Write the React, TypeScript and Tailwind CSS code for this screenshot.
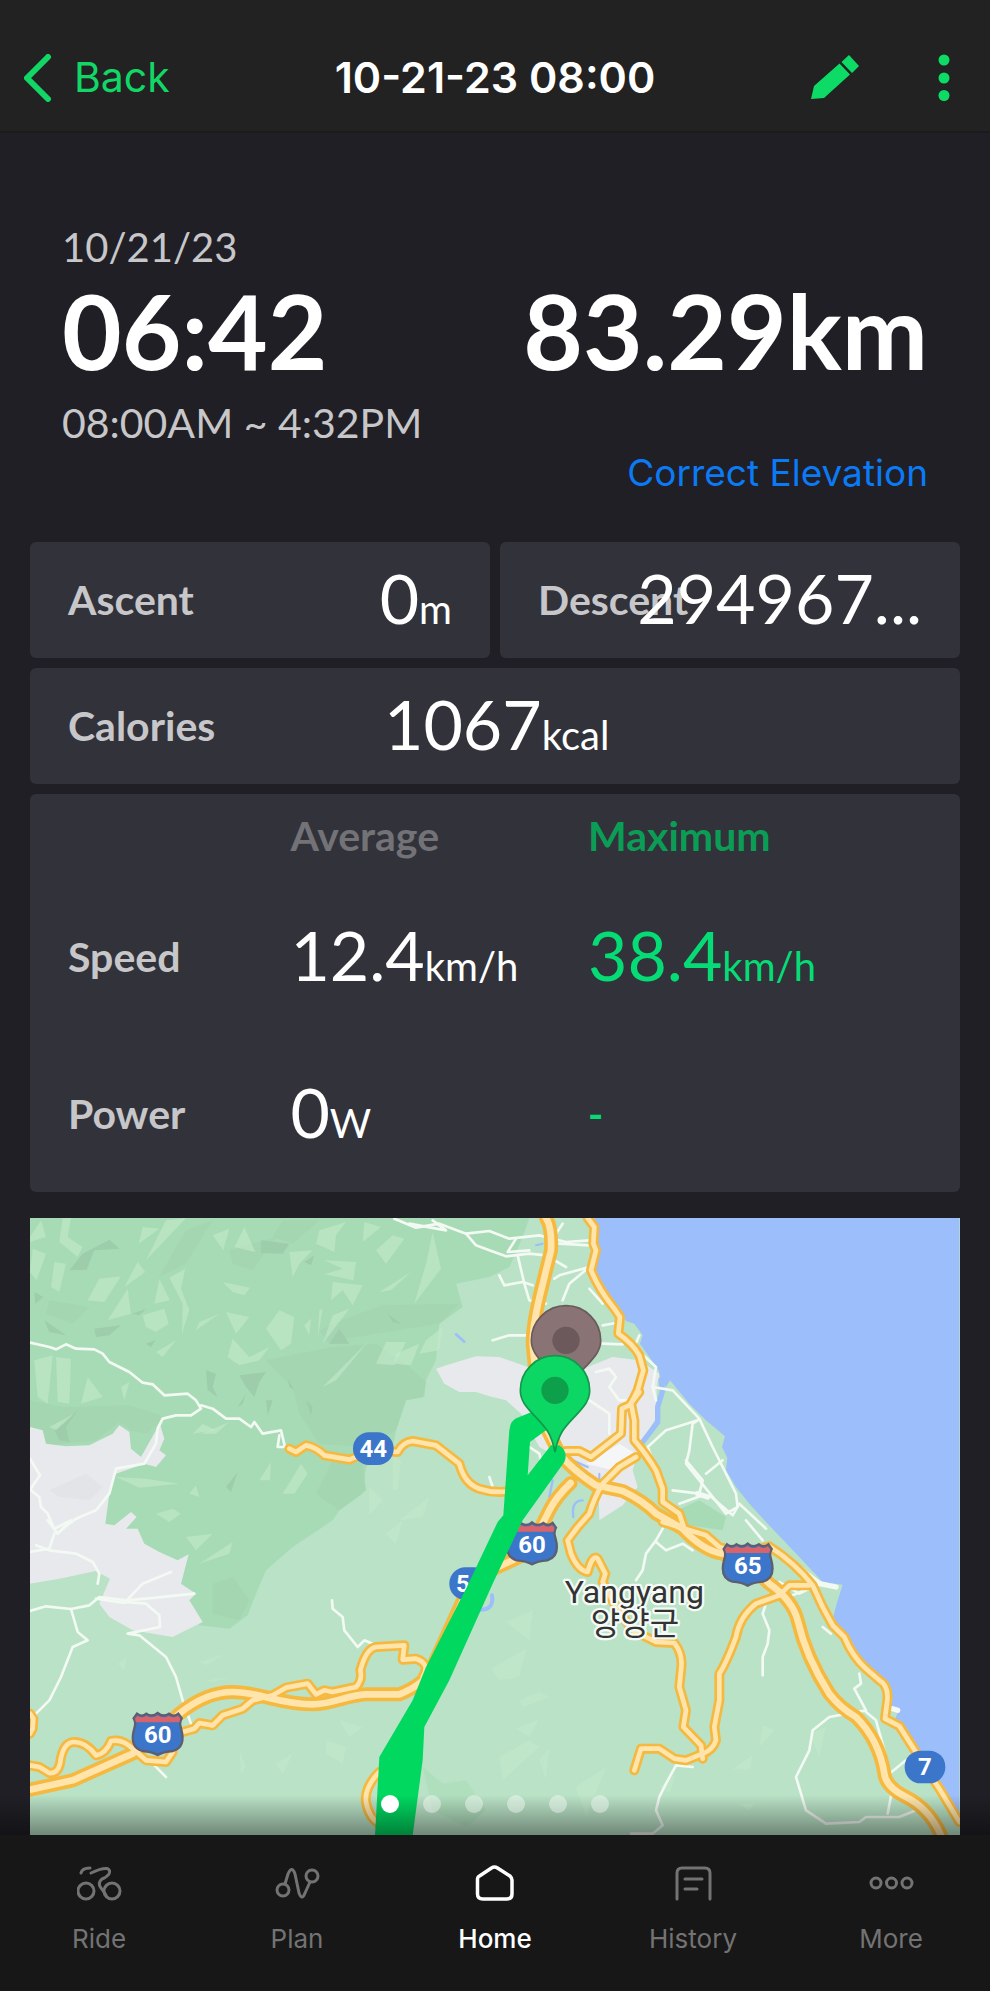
import { useState } from "react";
import type { ReactNode } from "react";
import clsx from "clsx";

interface Road {
  d: string;
  wide?: boolean;
}

// Land cover, drawn as closed polygons
const FOREST =
  "M92 53H1590L1570 110L1530 200L1470 230L1370 250L1390 320L1320 370L1310 480L1280 540L1275 590L1220 600L1190 690L1180 740L1100 800L1090 880L1020 930L1000 960L880 1040L800 1110L770 1180L745 1245L690 1285L600 1275L560 1200L300 1110L92 1150Z";
const WEST_TOWN =
  "M92 680L130 690L140 730L200 738L270 735L340 700L360 675L390 695L395 745L425 770L470 690L480 665L495 715L480 750L500 765L470 800L435 790L350 820L330 880L318 970L345 975L395 935L412 950L380 985L415 985L435 1030L480 1055L535 1080L568 1062L545 1150L590 1180L570 1200L610 1265L520 1310L400 1290L330 1250L300 1210L332 1135L290 1112L180 1135L92 1150Z";
const EAST_TOWN =
  "M1310 505L1340 495L1430 468L1500 470L1600 505L1740 510L1840 470L1920 480L1980 520L1972 560L1972 650L1920 740L1900 810L1915 860L1870 915L1800 960L1798 870L1710 790L1620 740L1565 640L1520 600L1470 588L1430 575L1380 575L1335 550Z";
const SEA =
  "M1785 53L1795 100L1798 170L1782 210L1820 270L1870 340L1880 362L1905 370L1930 405L1922 430L1978 510L1985 540L2000 560L2012 540L2070 610L2120 660L2177 708L2168 740L2184 772L2180 810L2210 860L2250 910L2300 965L2400 1070L2470 1145L2530 1153L2512 1210L2498 1265L2530 1300L2570 1365L2672 1452L2666 1520L2700 1525L2686 1560L2715 1605L2755 1650L2815 1740L2850 1800L2880 1850V53Z";

const LIGHT_FACETS = [
  "M92 110L125 60L140 110L92 125Z",
  "M190 53H215L205 110L250 140L235 170L180 125Z",
  "M100 145L140 160L112 240L92 215Z",
  "M165 185L200 190L180 275L155 260Z",
  "M430 80L480 85L418 130Z",
  "M500 60L560 53L440 180Z",
  "M640 105L690 85L672 150Z",
  "M735 80L768 155L705 140Z",
  "M870 155L940 150L900 190L880 230Z",
  "M960 90L1040 65L1010 105L1005 155L950 130Z",
  "M1095 65L1145 80L1090 125Z",
  "M1130 150L1180 105L1215 115L1160 190Z",
  "M975 180L1070 185L1062 240L975 222L1030 205Z",
  "M1300 95L1325 205L1245 310L1280 190Z",
  "M1000 245L1090 255L1060 315L1030 270L995 300Z",
  "M1140 275L1235 215L1175 270Z",
  "M300 235L365 228L315 305L265 300Z",
  "M415 185L438 215L375 260Z",
  "M480 235L512 300L465 310Z",
  "M510 232L558 205L545 265L570 330L548 400L550 310Z",
  "M385 265L395 340L325 360Z",
  "M670 245L752 262L735 285L700 275Z",
  "M430 345L495 325L508 370L470 395L440 380Z",
  "M600 365L660 340L590 390Z",
  "M680 335L750 350L710 400Z",
  "M840 330L885 350L875 430L845 450L800 385Z",
  "M915 375L935 355L930 405Z",
  "M960 330L970 325L955 415Z",
  "M1000 345L1050 325L970 430Z",
  "M700 415L750 470L810 440L780 480L720 495L685 470Z",
  "M105 480L160 465L145 610L115 590Z",
  "M170 470L215 475L210 610L175 605Z",
  "M245 610L265 530L310 590Z",
  "M365 560L390 545L375 600Z",
  "M1130 490L1160 425L1220 425L1185 495Z",
  "M1190 460L1260 430L1235 495L1185 490Z",
  "M1280 420L1330 380L1320 450L1260 460Z",
  "M970 560L1110 420L1010 540Z",
  "M470 455L530 420L490 470Z",
  "M150 680L225 640L170 690Z",
  "M350 830L440 835L540 850L420 862Z",
  "M540 740L610 670L650 690L580 700Z",
  "M605 700L690 665L650 700Z",
  "M780 840L815 785L812 840Z",
  "M850 880L905 790L925 820L885 880Z",
  "M570 880L590 855L600 890Z",
  "M470 940L520 925L545 940L510 965Z",
  "M1180 765L1205 780L1195 870L1180 870Z",
  "M1110 860L1150 900L1110 945Z",
  "M1200 960L1290 890L1270 950Z",
  "M1160 1000L1210 960L1190 1030Z",
  "M600 1090L700 1025L690 1060Z",
  "M560 1010L640 1000L590 1050Z",
  "M355 1390L382 1370L375 1410Z",
  "M600 1385L680 1360L620 1395Z",
  "M620 1440L700 1430L640 1445Z",
  "M830 1690L880 1660L850 1720Z",
  "M980 1620L1040 1640L1030 1690L980 1660Z",
  "M1020 1560L1090 1580L1050 1610Z",
  "M720 1650L740 1700L725 1720Z",
  "M1520 1265L1600 1230L1590 1320Z",
  "M1475 1405L1580 1345L1560 1430L1500 1440Z",
  "M1560 1500L1620 1475L1650 1490L1570 1520Z",
  "M1550 1585L1620 1555L1590 1610Z",
  "M1500 1670L1590 1620L1620 1640L1510 1740Z",
  "M1620 1680L1650 1640L1640 1740Z",
  "M1730 1760L1820 1700L1760 1850Z",
  "M2200 1705L2260 1665L2250 1710Z",
  "M2290 1575L2325 1590L2280 1640Z",
  "M2430 1600L2480 1580L2460 1670Z",
  "M1980 1760L2030 1720L2010 1780Z",
  "M2220 1810L2265 1810L2250 1830Z",
];

const DARK_FACETS = [
  "M250 160L330 118L360 145L285 150L262 208L210 210Z",
  "M785 120L870 130L850 160L785 158Z",
  "M915 185L945 165L935 195Z",
  "M105 275L132 290L108 310Z",
  "M135 360L200 405L150 395Z",
  "M285 385L365 375L330 405L290 410Z",
  "M990 430L1020 385L1050 430Z",
  "M1165 340L1205 370L1180 365Z",
  "M440 430L470 418L455 440Z",
  "M620 510L650 520L640 560L655 590L625 570Z",
  "M720 525L800 515L780 545L765 590L740 560Z",
  "M865 535L885 570L870 560Z",
  "M800 600L820 600L805 645Z",
  "M920 600L940 620L935 645Z",
  "M715 620L740 580L730 610Z",
  "M680 860L715 815L695 875Z",
  "M165 690L235 630L200 680L210 725L180 720Z",
  "M400 340L440 325L420 345Z",
];

// Slightly shaded slopes
const SLOPES = [
  "M1050 350L1150 315L1380 310L1320 370L1130 400L1010 420L990 430L960 390Z",
  "M800 480L1000 440L1130 430L1230 500L1280 545L1270 590L1220 600L1190 690L1100 740L960 730L900 640L880 560Z",
  "M92 600L190 620L390 615L500 650L440 700L395 690L360 665L290 720L150 735L92 680Z",
  "M690 150L830 110L760 210L700 190Z",
  "M150 300L270 320L220 370L140 340Z",
  "M950 880L1000 780L1090 790L1100 870L1020 930Z",
  "M560 90L640 60L560 190L480 230Z",
  "M850 60L960 60L880 130L820 110Z",
  "M640 1150L700 1130L750 1200L720 1260L640 1240Z",
];

const MINOR_ROADS = [
  "M92 427L150 440L170 447L200 432L230 445L285 447L310 460L330 485L390 515L430 547L460 552L495 585L565 580L590 600L605 625L575 645L530 645L490 655L475 685L470 730L435 790L350 805L330 880L290 930L230 955L190 985",
  "M605 615L640 625L680 655L720 655L755 680L765 665L790 700L845 690L857 740L835 740L840 705",
  "M92 775L122 825L92 868L120 890L125 920L145 940L165 985L215 960",
  "M145 960L175 1000L215 962",
  "M165 1000L150 1045L92 1055",
  "M110 1035L150 1050L230 1060L280 1085L300 1120L295 1150",
  "M92 1232L140 1218L215 1226L270 1215L300 1190L380 1200L440 1195L585 1180",
  "M290 1195L375 1208L430 1150L515 1115",
  "M375 1205L440 1210L480 1245L482 1280L385 1300L420 1305L500 1370L530 1430L550 1500L575 1570",
  "M215 1226L235 1295L265 1320L220 1340L185 1430L150 1500L110 1540",
  "M998 1200L1000 1225L1030 1250L1035 1290L1075 1340L1095 1320L1120 1330",
  "M460 1690L500 1730",
  "M1185 55L1250 82L1320 70L1400 100L1470 92L1530 115L1620 105L1700 125L1770 120",
  "M1230 70L1340 90L1300 60M1400 100L1430 135L1470 150L1520 168L1590 160L1640 165L1700 200",
  "M1550 115L1525 155L1590 150M1555 165L1575 250L1590 300L1640 310",
  "M1500 225L1515 255L1570 245L1600 255",
  "M1480 420L1530 405L1590 405M1810 375L1850 368M1810 430L1870 432",
  "M1690 300L1710 250L1770 200L1680 225L1665 235M1690 70L1670 100M1680 130L1770 135",
  "M1770 265L1810 310M1920 405L1905 440L1970 500L1960 560L1970 600",
  "M1790 515L1830 505L1850 530L1830 560L1860 600L1890 600M1770 600L1830 640L1830 700",
  "M1960 560L2020 570L2100 655L2140 740L2170 800L2210 880L2215 920L2180 940L2060 790L2070 750L2080 670L2095 660L2000 690L1945 740L1960 780",
  "M2060 780L2110 840L2100 880L2020 870M2110 885L2040 910M2130 885L2200 945L2220 910L2300 985",
  "M2120 820L2170 780",
  "M1990 985L1970 1020L1940 1060L1930 1110L1910 1140M1970 1025L2000 1050L2050 1030L2080 1050",
  "M2240 960L2290 1020M2300 1210L2290 1240L2310 1290L2305 1330L2290 1370L2290 1425",
  "M2340 1145L2400 1180L2440 1160L2380 1185",
  "M2580 1420L2585 1450L2565 1465L2600 1530L2490 1550L2440 1590L2430 1650L2390 1730L2405 1780L2420 1830L2480 1870L2580 1865L2600 1850L2700 1850L2750 1830",
  "M2600 1535L2630 1560L2655 1650L2670 1720L2720 1680M2680 1760L2665 1840",
  "M2080 1700L2030 1695L2000 1750L1980 1790L1970 1830L1990 1875L1960 1900L1895 1900",
  "M2470 1280L2495 1300",
  "M1590 740L1620 760L1630 800M1470 830L1480 860",
];

const ROADS: Road[] = [
  { d: "M870 745L890 755L920 735Q950 740 975 765L1050 778L1120 750L1195 755Q1210 725 1240 722L1310 735L1380 790Q1395 850 1440 865T1530 872" },
  { d: "M92 1695L120 1700L150 1718Q175 1720 182 1690Q190 1625 225 1625T290 1665Q320 1660 335 1622Q370 1615 400 1645L440 1680L500 1685L520 1655" },
  { d: "M550 1595L585 1585L600 1568L640 1575L670 1545L730 1525L760 1500L820 1485L860 1462L925 1450L950 1482L975 1470L1000 1475L1070 1460Q1090 1440 1083 1410Q1100 1345 1130 1340L1215 1335L1210 1378L1250 1375Q1295 1390 1270 1430" },
  { d: "M92 1540L102 1555L100 1585L92 1600" },
  { d: "M1140 1715Q1095 1760 1100 1805Q1110 1860 1150 1875" },
  { d: "M1765 53L1785 80L1782 130L1790 150L1775 210Q1800 270 1845 325L1862 350L1857 400Q1900 430 1920 465L1932 510L1915 570L1895 610L1905 660L1905 720Q1940 760 1970 810L1990 865L1990 905L2040 940L2055 985" },
  { d: "M1920 575L1890 615L1868 625L1865 700L1775 770L1740 752L1700 752" },
  { d: "M1910 770L1860 800L1810 850Q1785 890 1770 940L1735 980L1705 1020L1715 1060Q1735 1110 1765 1115Q1780 1060 1795 1075L1818 1120L1810 1145L1850 1220L1900 1290L1970 1325L2025 1328Q2050 1360 2046 1400L2040 1460L2060 1530L2052 1580L2105 1635L2110 1675" },
  { d: "M2430 1155L2370 1155L2340 1185L2270 1210Q2220 1250 2210 1310Q2180 1390 2160 1420L2160 1500L2145 1580L2150 1620Q2140 1650 2110 1660L2060 1680L2025 1675L1980 1645L1925 1645L1905 1710" },
  { d: "M1990 965L2120 1005L2160 1040L2230 1060L2310 1038Q2390 1090 2440 1155L2470 1220L2500 1275L2535 1310Q2560 1370 2600 1405L2640 1440Q2668 1455 2664 1500L2657 1555L2700 1577L2740 1640L2777 1700L2820 1765L2880 1865" },
  { d: "M92 1768L220 1740L400 1660L475 1600L540 1540Q620 1475 700 1475C780 1475 840 1512 940 1512C1000 1512 1040 1485 1100 1482H1200Q1280 1450 1300 1400L1400 1180L1470 1112L1560 1070L1600 1030L1650 930Q1670 890 1714 848", wide: true },
  { d: "M1640 53Q1658 80 1655 150L1628 260Q1600 370 1600 430L1620 640L1680 760Q1720 810 1790 855L1870 872Q1930 900 1970 940L2050 985Q2110 1050 2170 1060L2245 1090L2310 1150Q2380 1200 2395 1260Q2420 1370 2490 1480Q2520 1520 2570 1550Q2640 1620 2655 1720Q2660 1760 2720 1790Q2790 1825 2825 1905", wide: true },
];

const INTERSTATES = [
  { x: 475, y: 1600, n: "60" },
  { x: 1598, y: 1028, n: "60" },
  { x: 2245, y: 1092, n: "65" },
];

const ROUTES = [
  { x: 1122, y: 745, n: "44" },
  { x: 1411, y: 1150, n: "56" },
  { x: 2777, y: 1700, n: "7" },
];

const PIN = "M0 185C-12 125 -30 110 -62 76C-88 48 -104 30 -104 0A104 104 0 1 1 104 0C104 30 88 48 62 76C30 110 12 125 0 185Z";

function Interstate({ x, y, n }: { x: number; y: number; n: string }) {
  return (
    <g transform={`translate(${x} ${y})`}>
      <path
        d="M-62 -60Q-48 -48 -34 -60Q-16 -48 0 -62Q16 -48 34 -60Q48 -48 62 -60L72 -46Q64 -34 70 -16Q86 40 46 52Q16 54 0 64Q-16 54 -46 52Q-86 40 -70 -16Q-64 -34 -72 -46Z"
        fill="#3b76cb"
        stroke="#5c5f72"
        strokeWidth="7"
      />
      <path d="M-60 -54Q-48 -44 -34 -54Q-16 -44 0 -55Q16 -44 34 -54Q48 -44 60 -54L68 -46L65 -34H-65L-68 -46Z" fill="#d9636a" />
      <text y="29" textAnchor="middle" fontSize="72" fontWeight="700" fill="#fff">
        {n}
      </text>
    </g>
  );
}

function RouteMap() {
  return (
    <svg
      viewBox="92 53 2790 1851"
      className="block h-auto w-full"
      style={{ fontFamily: 'Roboto, "Noto Sans CJK KR", sans-serif' }}
      role="img"
      aria-label="Route map"
    >
      <rect x="92" y="53" width="2790" height="1851" fill="#b9e2c6" />
      <path d={FOREST} fill="#a7dbb5" />
      <path d="M2010 940L2100 900L2180 950L2170 990L2040 970Z" fill="#a7dbb5" />
      <path d="M1270 1700L1330 1750L1400 1740L1460 1830L1400 1880L1300 1830Z" fill="#b0dfbe" />
      {SLOPES.map((d) => (
        <path key={d} d={d} fill="#a4d6b1" />
      ))}
      {DARK_FACETS.map((d) => (
        <path key={d} d={d} fill="#9dcdab" />
      ))}
      {LIGHT_FACETS.map((d) => (
        <path key={d} d={d} fill="#c3e9cc" fillOpacity="0.6" />
      ))}
      <path d={WEST_TOWN} fill="#e8e9ed" />
      <path d="M150 870L260 820L310 860L270 900L180 890Z" fill="#e3e4e8" />
      <path d={EAST_TOWN} fill="#e8e9ed" />
      <path d="M1760 790L1860 730L1910 760L1840 810Z" fill="#f4f6f7" />
      <path d={SEA} fill="#9cbefa" />

      <g fill="none" stroke="#9cbefa" strokeWidth="12" strokeLinecap="round">
        <path d="M1985 540L1990 570L1975 620L1975 665L1930 725" strokeWidth="16" />
        <path d="M1370 402L1395 424" strokeWidth="8" />
        <path d="M1750 900Q1715 900 1722 950M1720 780L1765 800M1660 840L1650 890" strokeWidth="7" />
        <path d="M1478 1185Q1485 1230 1440 1228" />
        <path d="M1610 135L1630 130M1800 820V840" strokeWidth="6" />
      </g>

      <g fill="none" stroke="#f3f9f3" strokeLinejoin="round" strokeLinecap="round" strokeWidth="8">
        {MINOR_ROADS.map((d) => (
          <path key={d} d={d} />
        ))}
        <path d="M2370 1080L2460 1150L2510 1160M2680 1525L2695 1530M2095 880L2125 890" strokeWidth="16" />
      </g>

      <g fill="none" strokeLinejoin="round" strokeLinecap="round">
        {ROADS.map((r) => (
          <path key={r.d} d={r.d} stroke="#f6b93f" strokeWidth={r.wide ? 42 : 30} />
        ))}
        {ROADS.map((r) => (
          <path key={r.d} d={r.d} stroke="#ffe5ac" strokeWidth={r.wide ? 20 : 14} />
        ))}
      </g>

      {ROUTES.map((r) => (
        <g key={r.n} transform={`translate(${r.x} ${r.y})`}>
          <rect x="-61" y="-49" width="122" height="98" rx="48" fill="#3b76cb" />
          <text y="25" textAnchor="middle" fontSize="72" fontWeight="700" fill="#fff">
            {r.n}
          </text>
        </g>
      ))}
      {INTERSTATES.map((s) => (
        <Interstate key={s.x} {...s} />
      ))}

      <text
        textAnchor="middle"
        fill="#333"
        stroke="#f4faf5"
        strokeWidth="14"
        strokeLinejoin="round"
        style={{ paintOrder: "stroke" }}
      >
        <tspan x="1905" y="1209" fontSize="96">
          Yangyang
        </tspan>
        <tspan x="1907" y="1304" fontSize="96">
          양양군
        </tspan>
      </text>

      {/* recorded track */}
      <path
        d="M1610 630L1560 650Q1532 658 1530 690L1512 945L1495 965L1400 1165L1280 1400L1240 1500L1140 1670L1127 1905H1240L1270 1680L1275 1580L1350 1440L1480 1150L1570 960L1695 785Q1708 755 1680 735L1655 735L1585 825L1592 725Q1596 700 1640 690Z"
        fill="#00d860"
      />
      <g transform="translate(1700 420)">
        <path d={PIN} fill="#8a7375" stroke="#6a5a5c" strokeWidth="5" />
        <circle r="41" fill="#6b595b" />
      </g>
      <path d="M1606 655L1640 690L1592 725Z" fill="#00d860" />
      <g transform="translate(1667 570)">
        <path d={PIN} fill="#0dd764" stroke="#12984c" strokeWidth="5" />
        <circle r="41" fill="#0e9f4b" />
      </g>
    </svg>
  );
}

const PAGES = [0, 1, 2, 3, 4, 5];

const TABS: { name: string; icon: ReactNode }[] = [
  {
    name: "Ride",
    icon: (
      <>
        <circle cx="9" cy="30" r="8" />
        <circle cx="35" cy="30" r="8" />
        <path d="M4 12Q5 7 13 7M14 12Q24 7 30 7.500Q34 9 32 13Q30 16 25 18Q20 22 24 27L29 34" />
      </>
    ),
  },
  {
    name: "Plan",
    icon: (
      <>
        <circle cx="8" cy="29" r="6" />
        <circle cx="37" cy="15" r="6" />
        <path d="M10 23L13 13Q17 4 20 13L24 32Q27 40 30 32L35 21" />
      </>
    ),
  },
  {
    name: "Home",
    icon: <path d="M4.500 18Q4.500 16 6.500 15L18.500 7Q21.500 5 24.500 7L37 15Q39 17 39 19V33Q39 38 34 38H10Q4.500 38 4.500 33Z" strokeWidth="3.500" />,
  },
  {
    name: "History",
    icon: <path d="M6 38V12Q6 7 11 7H34Q39 7 39 12V38M14 18H31M14 28H26" />,
  },
  {
    name: "More",
    icon: (
      <>
        <circle cx="7" cy="22" r="5" />
        <circle cx="22.500" cy="22" r="5" />
        <circle cx="38" cy="22" r="5" />
      </>
    ),
  },
];

function Metric({ value, unit }: { value: string; unit?: string }) {
  return (
    <span className="block pb-1 whitespace-nowrap text-[68px] leading-[80px]">
      {value}
      {unit && <span className="text-[40px] leading-none">{unit}</span>}
    </span>
  );
}

export default function App() {
  const [tab, setTab] = useState("Home");
  const [page, setPage] = useState(0);

  return (
    <div className="flex min-h-screen flex-col bg-[#201f25] font-['Lato',sans-serif] text-white">
      <header className="grid h-[133px] grid-cols-[1fr_auto_1fr] items-center border-b-2 border-[#1b1b1d] bg-[#222222] pt-6 font-['Inter',sans-serif] text-[41px]">
        <button type="button" className="flex items-center gap-[22px] pl-6 text-[#12d767]">
          <svg className="h-12 w-7" viewBox="0 0 28 48" fill="none" stroke="currentColor" strokeWidth="6" strokeLinecap="round" strokeLinejoin="round">
            <path d="M24 3L3 24L24 45" />
          </svg>
          Back
        </button>
        <h1 className="text-[43px] font-semibold">10-21-23 08:00</h1>
        <div className="flex items-center justify-end gap-[78px] pr-10 text-[#0ddb65]">
          <button type="button" aria-label="Edit">
            <svg className="h-12 w-[50px]" viewBox="0 0 50 48" fill="currentColor">
              <path d="M39 1L49 12L42 19L31.500 8ZM29.500 9.500L40 20.500L14 44L1 45L4 32Z" />
            </svg>
          </button>
          <button type="button" aria-label="Menu">
            <svg className="h-12 w-3" viewBox="0 0 12 48" fill="currentColor">
              <circle cx="6" cy="6" r="5.500" />
              <circle cx="6" cy="24" r="5.500" />
              <circle cx="6" cy="41.500" r="5.500" />
            </svg>
          </button>
        </div>
      </header>

      <main className="flex-1">
        <section className="px-[62px] pt-[89px] pb-11">
          <p className="text-[40px] leading-[50px] text-[#c7c7ca]">10/21/23</p>
          <div className="mt-2 flex justify-between text-[103px] leading-[100px] font-bold">
            <span>06:42</span>
            <span>83.29km</span>
          </div>
          <p className="mt-[18px] text-[41px] leading-[50px] text-[#c7c7ca]">08:00AM ~ 4:32PM</p>
          <div className="flex justify-end">
            <button type="button" className="font-['Inter',sans-serif] text-[37px] leading-[50px] text-[#0a7bf5]">
              Correct Elevation
            </button>
          </div>
        </section>

        <section className="grid grid-cols-2 gap-[10px] px-[30px]">
          <div className="flex h-[116px] items-center justify-between rounded-md bg-[#32323a] px-[38px]">
            <span className="text-[41px] font-bold text-[#c7c7ca]">Ascent</span>
            <Metric value="0" unit="m" />
          </div>
          <div className="relative flex h-[116px] items-center justify-end rounded-md bg-[#32323a] px-[38px]">
            <span className="absolute left-[38px] text-[41px] font-bold text-[#c7c7ca]">Descent</span>
            <span className="relative">
              <Metric value="294967..." />
            </span>
          </div>
          <div className="col-span-2 flex h-[116px] items-center rounded-md bg-[#32323a] px-[38px]">
            <span className="w-[37%] text-[41px] font-bold text-[#c7c7ca]">Calories</span>
            <Metric value="1067" unit="kcal" />
          </div>
          <div className="col-span-2 rounded-md bg-[#32323a]">
            <table className="w-full table-fixed text-left">
              <thead>
                <tr className="h-[84px] text-[41px]">
                  <td className="w-[28%]" />
                  <th scope="col" className="w-[32%] font-bold text-[#737377]">Average</th>
                  <th scope="col" className="font-bold text-[#0b9d56]">Maximum</th>
                </tr>
              </thead>
              <tbody>
                <tr className="h-[157px]">
                  <th scope="row" className="pl-[38px] text-[41px] font-bold text-[#c7c7ca]">Speed</th>
                  <td><Metric value="12.4" unit="km/h" /></td>
                  <td className="text-[#06dc75]"><Metric value="38.4" unit="km/h" /></td>
                </tr>
                <tr className="h-[157px]">
                  <th scope="row" className="pl-[38px] text-[41px] font-bold text-[#c7c7ca]">Power</th>
                  <td><Metric value="0" unit="W" /></td>
                  <td className="text-[41px] font-bold text-[#06dc75]">-</td>
                </tr>
              </tbody>
            </table>
          </div>
        </section>

        <section className="relative mx-[30px] mt-[26px]">
          <RouteMap />
          <div className="absolute inset-x-0 bottom-[22px] z-10 flex justify-center gap-6">
            {PAGES.map((p) => (
              <button
                key={p}
                type="button"
                aria-label={`Page ${p + 1}`}
                onClick={() => setPage(p)}
                className={clsx("size-[18px] rounded-full", p === page ? "bg-white" : "bg-white/40")}
              />
            ))}
          </div>
        </section>
      </main>

      <nav className="relative grid h-[156px] grid-cols-5 bg-[#171717] font-['Inter',sans-serif]">
        <div className="pointer-events-none absolute inset-x-0 -top-10 h-10 bg-linear-to-b from-transparent to-black/40" />
        {TABS.map((t) => (
          <button
            key={t.name}
            type="button"
            onClick={() => setTab(t.name)}
            className={clsx(
              "flex flex-col items-center pt-[26px] text-[26px] leading-8",
              t.name === tab ? "font-medium text-white" : "text-[#737373]"
            )}
          >
            <svg className="mb-[18px] h-11 w-[45px]" viewBox="0 0 45 44" fill="none" stroke="currentColor" strokeWidth="3" strokeLinecap="round" strokeLinejoin="round">
              {t.icon}
            </svg>
            {t.name}
          </button>
        ))}
      </nav>
    </div>
  );
}
